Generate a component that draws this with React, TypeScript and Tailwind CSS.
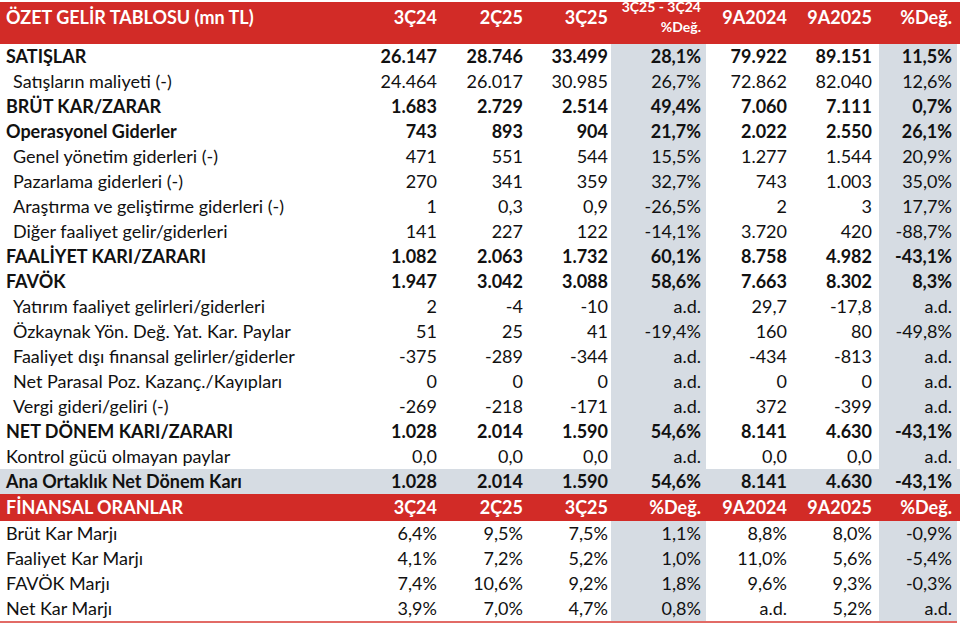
type Row = {
  label: string;
  values: string[];
  bold?: boolean;
  indent?: boolean;
};

const incomeRows: Row[] = [
  { label: "SATIŞLAR", bold: true, values: ["26.147", "28.746", "33.499", "28,1%", "79.922", "89.151", "11,5%"] },
  { label: "Satışların maliyeti (-)", indent: true, values: ["24.464", "26.017", "30.985", "26,7%", "72.862", "82.040", "12,6%"] },
  { label: "BRÜT KAR/ZARAR", bold: true, values: ["1.683", "2.729", "2.514", "49,4%", "7.060", "7.111", "0,7%"] },
  { label: "Operasyonel Giderler", bold: true, values: ["743", "893", "904", "21,7%", "2.022", "2.550", "26,1%"] },
  { label: "Genel yönetim giderleri (-)", indent: true, values: ["471", "551", "544", "15,5%", "1.277", "1.544", "20,9%"] },
  { label: "Pazarlama giderleri (-)", indent: true, values: ["270", "341", "359", "32,7%", "743", "1.003", "35,0%"] },
  { label: "Araştırma ve geliştirme giderleri (-)", indent: true, values: ["1", "0,3", "0,9", "-26,5%", "2", "3", "17,7%"] },
  { label: "Diğer faaliyet gelir/giderleri", indent: true, values: ["141", "227", "122", "-14,1%", "3.720", "420", "-88,7%"] },
  { label: "FAALİYET KARI/ZARARI", bold: true, values: ["1.082", "2.063", "1.732", "60,1%", "8.758", "4.982", "-43,1%"] },
  { label: "FAVÖK", bold: true, values: ["1.947", "3.042", "3.088", "58,6%", "7.663", "8.302", "8,3%"] },
  { label: "Yatırım faaliyet gelirleri/giderleri", indent: true, values: ["2", "-4", "-10", "a.d.", "29,7", "-17,8", "a.d."] },
  { label: "Özkaynak Yön. Değ. Yat. Kar. Paylar", indent: true, values: ["51", "25", "41", "-19,4%", "160", "80", "-49,8%"] },
  { label: "Faaliyet dışı finansal gelirler/giderler", indent: true, values: ["-375", "-289", "-344", "a.d.", "-434", "-813", "a.d."] },
  { label: "Net Parasal Poz. Kazanç./Kayıpları", indent: true, values: ["0", "0", "0", "a.d.", "0", "0", "a.d."] },
  { label: "Vergi gideri/geliri (-)", indent: true, values: ["-269", "-218", "-171", "a.d.", "372", "-399", "a.d."] },
  { label: "NET DÖNEM KARI/ZARARI", bold: true, values: ["1.028", "2.014", "1.590", "54,6%", "8.141", "4.630", "-43,1%"] },
  { label: "Kontrol gücü olmayan paylar", values: ["0,0", "0,0", "0,0", "a.d.", "0,0", "0,0", "a.d."] },
];

const ratioRows: Row[] = [
  { label: "Brüt Kar Marjı", values: ["6,4%", "9,5%", "7,5%", "1,1%", "8,8%", "8,0%", "-0,9%"] },
  { label: "Faaliyet Kar Marjı", values: ["4,1%", "7,2%", "5,2%", "1,0%", "11,0%", "5,6%", "-5,4%"] },
  { label: "FAVÖK Marjı", values: ["7,4%", "10,6%", "9,2%", "1,8%", "9,6%", "9,3%", "-0,3%"] },
  { label: "Net Kar Marjı", values: ["3,9%", "7,0%", "4,7%", "0,8%", "a.d.", "5,2%", "a.d."] },
];

const grid = "grid grid-cols-[357px_85px_86px_83px_95px_86px_87px_78px]";
const cellPad = ["pr-[5px]", "pr-[5px]", "pr-[3px]", "pr-[5px]", "pr-[5px]", "pr-[7px]", "pr-[5px]"];
const shadedCol = [false, false, false, true, false, false, true];

function DataRow({ row, shaded }: { row: Row; shaded?: boolean }) {
  return (
    <div className={`${grid} h-[25px] leading-[25px] ${shaded ? "bg-[#d6dce3]" : ""} ${row.bold ? "font-bold" : ""}`}>
      <div className={`${row.indent ? "pl-[13px]" : "pl-[6px]"} whitespace-nowrap`}>{row.label}</div>
      {row.values.map((v, i) => (
        <div key={i} className={`text-right ${cellPad[i]} ${shadedCol[i] ? "bg-[#d6dce3]" : ""}`}>
          {v}
        </div>
      ))}
    </div>
  );
}

export default function App() {
  const ratioHead = ["3Ç24", "2Ç25", "3Ç25", "%Değ.", "9A2024", "9A2025", "%Değ."];

  return (
    <div className="w-[960px] h-[624px] bg-white pt-[2px] text-[18px] text-[#111] font-['Lato',sans-serif]">
      <div className={`${grid} h-[42px] bg-[#d22b27] text-white font-bold leading-[25px]`}>
        <div className="pl-[6px] pt-[3px] whitespace-nowrap">ÖZET GELİR TABLOSU (mn TL)</div>
        <div className="text-right pr-[5px] pt-[3px]">3Ç24</div>
        <div className="text-right pr-[5px] pt-[3px]">2Ç25</div>
        <div className="text-right pr-[3px] pt-[3px]">3Ç25</div>
        <div className="h-[42px] overflow-hidden flex flex-col justify-end pb-[7px] pr-[5px] text-right text-[14px] leading-[20px]">
          <div>3Ç25 - 3Ç24</div>
          <div>%Değ.</div>
        </div>
        <div className="text-right pr-[5px] pt-[3px]">9A2024</div>
        <div className="text-right pr-[7px] pt-[3px]">9A2025</div>
        <div className="text-right pr-[5px] pt-[3px]">%Değ.</div>
      </div>

      {incomeRows.map((r) => (
        <DataRow key={r.label} row={r} />
      ))}
      <DataRow row={{ label: "Ana Ortaklık Net Dönem Karı", bold: true, values: ["1.028", "2.014", "1.590", "54,6%", "8.141", "4.630", "-43,1%"] }} shaded />

      <div className={`${grid} h-[27px] leading-[27px] bg-[#d22b27] text-white font-bold`}>
        <div className="pl-[6px]">FİNANSAL ORANLAR</div>
        {ratioHead.map((h, i) => (
          <div key={i} className={`text-right ${cellPad[i]}`}>
            {h}
          </div>
        ))}
      </div>

      {ratioRows.map((r) => (
        <DataRow key={r.label} row={r} />
      ))}
      <div className="w-[957px] h-[2px] bg-[#e26b66]" />
    </div>
  );
}
